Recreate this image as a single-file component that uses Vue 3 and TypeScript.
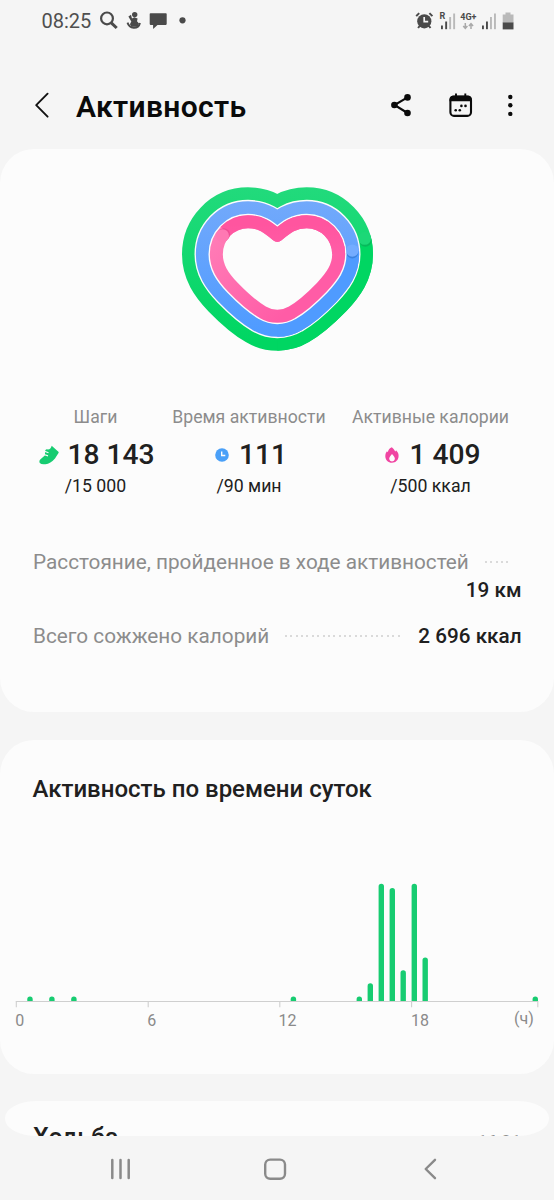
<script setup lang="ts">
interface Metric {
  id: 'steps' | 'time' | 'calories'
  label: string
  value: string
  goal: string
}

interface Bar {
  x: number
  height: number
}

interface Tick {
  x: number
  labelX: number
  label: string
}

const metrics: Metric[] = [
  { id: 'steps', label: 'Шаги', value: '18 143', goal: '/15 000' },
  { id: 'time', label: 'Время активности', value: '111', goal: '/90 мин' },
  { id: 'calories', label: 'Активные калории', value: '1 409', goal: '/500 ккал' },
]

const bars: Bar[] = [
  { x: 30, height: 4.5 },
  { x: 51.9, height: 4.5 },
  { x: 73.9, height: 4.5 },
  { x: 293.4, height: 4.5 },
  { x: 359.3, height: 4.5 },
  { x: 370.3, height: 17.7 },
  { x: 381.3, height: 117.3 },
  { x: 392.3, height: 113 },
  { x: 403.2, height: 30.7 },
  { x: 414.3, height: 117.3 },
  { x: 425.2, height: 43.6 },
  { x: 535.3, height: 4.5 },
]

const ticks: Tick[] = [
  { x: 16.3, labelX: 15.3, label: '0' },
  { x: 148.2, labelX: 147.2, label: '6' },
  { x: 279.8, labelX: 278.6, label: '12' },
  { x: 411.6, labelX: 411, label: '18' },
  { x: 537.8, labelX: 0, label: '' },
]

const baseline = 131
const barWidth = 5.4

function barPath(bar: Bar): string {
  const r = barWidth / 2
  const left = bar.x - r
  const right = bar.x + r
  const top = baseline - bar.height
  return `M${left} ${baseline}V${top + r}A${r} ${r} 0 0 1 ${right} ${top + r}V${baseline}Z`
}

const heart =
  'M322 181C350 157 372 140 410 140C463 140 506 184 506 238C506 275 487 303 455 337C425 368 390 398 365 412C350 421 337 424 322 424C307 424 294 421 279 412C254 398 219 368 189 337C157 303 139 275 139 238C139 184 181 140 234 140C272 140 294 157 322 181Z'
</script>

<template>
  <div class="screen">
    <header class="status">
      <span class="clock">08:25</span>
      <svg class="status-left" width="100" height="24" viewBox="0 0 100 24">
        <circle cx="13" cy="10.400" r="5.900" fill="none" stroke="#4a4a4a" stroke-width="2.200" />
        <path d="M17.300 14.800l5.400 5.200" stroke="#4a4a4a" stroke-width="3" />
        <g fill="#4a4a4a">
          <circle cx="40.700" cy="6.600" r="2.700" />
          <path d="M34.400 8.600l2.600-1.800 1 3.800 2.200-1.400 3.400 1.200-.6 2.800 2 2.200-1.400 3.400h-6l-1.700-2.600 1.400-2.600z" />
          <path d="M33.500 14.600q1.400 4.600 6.200 5.200q5 .2 6.300-4.800" fill="none" stroke="#4a4a4a" stroke-width="1.900" />
          <path d="M56.500 5.300h15.400q.8 0 .8.8v10q0 .8-.8.8h-8.400l-4.400 4v-4h-2.600q-.8 0-.8-.8v-10q0-.8.8-.8z" />
          <circle cx="88.500" cy="12.300" r="3.100" />
        </g>
      </svg>
      <svg class="status-right" width="104" height="24" viewBox="0 0 104 24">
        <g fill="#4a4a4a">
          <circle cx="14.300" cy="13.300" r="7.100" />
          <path d="M9.600 18l-1.500 2M19 18l1.500 2M6.200 8.100l3-3M22.400 8.100l-3-3" stroke="#4a4a4a" stroke-width="2" />
          <path d="M14.200 9v4.700h4" fill="none" stroke="#f5f5f5" stroke-width="1.700" />
          <rect x="31" y="17.500" width="1.900" height="3.700" />
          <rect x="35.200" y="13.500" width="1.900" height="7.700" />
          <rect x="72" y="17.500" width="1.900" height="3.700" />
          <rect x="76" y="13.500" width="1.900" height="7.700" />
        </g>
        <g fill="#b9b9b9">
          <rect x="39.200" y="9" width="1.900" height="12.200" />
          <rect x="43.200" y="5.500" width="1.900" height="15.700" />
          <rect x="80" y="9" width="1.900" height="12.200" />
          <rect x="84" y="5.500" width="1.900" height="15.700" />
          <path d="M95.500 4.600h5v1.800h3v8.500H92.700V6.400h2.800z" />
        </g>
        <rect x="92.700" y="14.500" width="10.800" height="6.900" fill="#4a4a4a" />
        <path d="M55.300 15v5M53.200 18.100l2.100 2.200 2.100-2.200M61 21v-5M58.900 17.900l2.100-2.200 2.100 2.200" fill="none" stroke="#a9a9a9" stroke-width="1.500" />
        <text class="tiny" x="29.500" y="11.300">R</text>
        <text class="tiny" x="50.300" y="12">4G+</text>
      </svg>
    </header>

    <nav class="appbar">
      <svg class="back" width="16" height="28" viewBox="0 0 16 28">
        <path d="M13.600 2.700L2.200 14.200l11.400 11.500" fill="none" stroke="#111" stroke-width="1.900" stroke-linecap="round" stroke-linejoin="round" />
      </svg>
      <h1>Активность</h1>
      <svg class="tools" width="130" height="30" viewBox="0 0 130 30">
        <path d="M17.500 7.300L4.500 15l13 8" fill="none" stroke="#0b0b0b" stroke-width="2.100" />
        <circle cx="17.500" cy="7.400" r="3.300" />
        <circle cx="4.400" cy="15" r="3.300" />
        <circle cx="17.500" cy="23" r="3.300" />
        <rect x="60.400" y="6.600" width="20.600" height="19.300" rx="3.600" fill="none" stroke="#0b0b0b" stroke-width="2.100" />
        <path d="M59.500 11.200v-2q0-3.500 3.500-3.500h15.300q3.500 0 3.500 3.500v2z" />
        <path d="M66 3.500v4M75.300 3.500v4" stroke="#0b0b0b" stroke-width="1.900" />
        <g>
          <circle cx="65.700" cy="20.200" r="1.300" />
          <circle cx="69.800" cy="20.200" r="1.300" />
          <circle cx="71.400" cy="15.900" r="1.300" />
          <circle cx="75.500" cy="15.900" r="1.300" />
        </g>
        <circle cx="120.300" cy="7" r="2.200" />
        <circle cx="120.300" cy="15.300" r="2.200" />
        <circle cx="120.300" cy="23.900" r="2.200" />
      </svg>
    </nav>

    <section class="card summary">
      <svg class="heart" width="215" height="185" viewBox="0 0 645 555">
        <defs>
          <linearGradient id="green" gradientUnits="userSpaceOnUse" x1="0" y1="36" x2="0" y2="500">
            <stop offset="0" stop-color="#22da7c" />
            <stop offset="1" stop-color="#00d662" />
          </linearGradient>
          <linearGradient id="blue" gradientUnits="userSpaceOnUse" x1="0" y1="80" x2="0" y2="470">
            <stop offset="0" stop-color="#72a9fb" />
            <stop offset="1" stop-color="#4f9bff" />
          </linearGradient>
          <linearGradient id="pink" gradientUnits="userSpaceOnUse" x1="130" y1="170" x2="360" y2="400">
            <stop offset="0" stop-color="#ff7db7" />
            <stop offset="1" stop-color="#ff5ca6" />
          </linearGradient>
          <linearGradient id="pink-top" gradientUnits="userSpaceOnUse" x1="0" y1="150" x2="0" y2="238">
            <stop offset="0" stop-color="#ff559f" />
            <stop offset="1" stop-color="#ff5da7" />
          </linearGradient>
          <clipPath id="green-tail"><rect x="322" y="192" width="320" height="360" /></clipPath>
          <clipPath id="blue-tail"><rect x="322" y="228" width="320" height="320" /></clipPath>
        </defs>
        <g stroke-linejoin="round">
          <path :d="heart" fill="none" stroke="url(#green)" stroke-width="206" />
          <path :d="heart" fill="none" stroke="#00d662" stroke-width="206" clip-path="url(#green-tail)" />
          <circle cx="586" cy="197" r="18.500" fill="#07b95b" />
          <circle cx="584" cy="190" r="19.500" fill="#1cd877" />
          <path :d="heart" fill="none" stroke="#fcfcfc" stroke-width="131" />
          <path :d="heart" fill="none" stroke="url(#blue)" stroke-width="123" />
          <path :d="heart" fill="none" stroke="#4f9bff" stroke-width="123" clip-path="url(#blue-tail)" />
          <circle cx="547" cy="233" r="17.500" fill="#3b82df" />
          <circle cx="547" cy="227" r="18.500" fill="#74acff" />
          <path :d="heart" fill="none" stroke="#fcfcfc" stroke-width="47" />
          <path :d="heart" fill="#fcfcfc" stroke="url(#pink)" stroke-width="39" />
          <path
            d="M166 169C183.500 151 207 140 234 140C272 140 294 157 322 181C350 157 372 140 410 140C463 140 506 184 506 238"
            fill="none" stroke="url(#pink-top)" stroke-width="39"
          />
          <circle cx="161" cy="178.500" r="19" fill="#ee4c93" />
          <circle cx="157.500" cy="182" r="19.500" fill="#ff78b3" />
        </g>
      </svg>

      <div class="metrics">
        <div v-for="m in metrics" :key="m.id" class="metric">
          <span class="label">{{ m.label }}</span>
          <div class="value" :class="m.id">
            <svg v-if="m.id === 'steps'" width="20" height="20" viewBox="0 0 20 20">
              <path
                d="M12.700.7L19.400 6.800q.5.600.1 1.300L16 13.500Q11.500 18.700 6.500 19.200Q2.500 19.800.8 18Q-.3 16 1.500 14.300L5.800 10.500 6.300 5.300Q7.300 3.600 9 4.500Q11.800 4.300 12.700.7z"
                fill="#17cc71"
              />
              <path d="M5.500 6.300l4 1.400M5 9.500l4 1.400" stroke="#fcfcfc" stroke-width="1.200" />
            </svg>
            <svg v-else-if="m.id === 'time'" width="14" height="14" viewBox="0 0 14 14">
              <circle cx="7" cy="7" r="6.800" fill="#4aa0f8" />
              <path d="M6.700 3.600v3.900h3.600" fill="none" stroke="#fcfcfc" stroke-width="1.400" />
            </svg>
            <svg v-else width="14" height="16" viewBox="0 0 14 16">
              <path
                d="M6.800.2C9 2 9.300 3.200 10.300 4.500Q10.900 3.900 11 3.200C13 5.100 13.700 7 13.600 9C13.500 13 10.600 15.700 7 15.700C3.300 15.700.3 13 .3 9.200C.3 7 1 5.300 2 4.200Q2.500 4.800 2.800 5.200C3.300 2.600 4.800 1 6.800.2z"
                fill="#f045a2"
              />
              <path d="M7 6.900C8.500 8.800 10 10 9.900 12.100Q9.500 14.500 7 14.600Q4.500 14.500 4.200 12.100C4.100 10 5.700 8.700 7 6.900z" fill="#fcfcfc" />
            </svg>
            <strong>{{ m.value }}</strong>
          </div>
          <span class="goal">{{ m.goal }}</span>
        </div>
      </div>

      <dl class="totals">
        <div class="total wrapped">
          <dt>Расстояние, пройденное в ходе активностей</dt>
          <span class="leader" />
          <dd>19 км</dd>
        </div>
        <div class="total">
          <dt>Всего сожжено калорий</dt>
          <span class="leader" />
          <dd>2 696 ккал</dd>
        </div>
      </dl>
    </section>

    <section class="card daytime">
      <h2>Активность по времени суток</h2>
      <svg class="chart" width="554" height="170" viewBox="0 0 554 170">
        <path v-for="bar in bars" :key="bar.x" :d="barPath(bar)" fill="#17cc71" />
        <path d="M15.800 131.500H538.300" stroke="#cfcfcf" stroke-width="1.100" />
        <path v-for="t in ticks" :key="t.x" :d="`M${t.x} 131.500v5.700`" stroke="#cfcfcf" stroke-width="1.100" />
        <text v-for="t in ticks" :key="t.label" class="axis" :x="t.labelX" y="156">{{ t.label }}</text>
        <text class="axis" x="514" y="153.700">(ч)</text>
      </svg>
    </section>

    <section class="card walk">
      <span class="walk-title">Ходьба</span>
      <span class="walk-time">16:31</span>
    </section>

    <footer class="navbar">
      <svg width="554" height="64" viewBox="0 0 554 64">
        <g fill="none" stroke="#8a8a8a" stroke-width="2.400" stroke-linecap="round" stroke-linejoin="round">
          <path d="M112.300 24v18M120.500 24v18M128.700 24v18" stroke-width="2.500" />
          <rect x="265.200" y="23.600" width="19.800" height="19.200" rx="5" />
          <path d="M435 23.800l-9.300 9.200 9.300 9.200" />
        </g>
      </svg>
    </footer>
  </div>
</template>

<style>
body {
  margin: 0;
  background: #f5f5f5;
}
</style>

<style scoped>
.screen {
  width: 554px;
  height: 1200px;
  overflow: hidden;
  background: #f5f5f5;
  font-family: Roboto, "Noto Sans", sans-serif;
  color: #202020;
  display: flex;
  flex-direction: column;
}

.screen svg {
  display: block;
  flex: none;
}

.status {
  height: 42px;
  display: flex;
  align-items: center;
  padding: 0 40.500px 0 41.500px;
  flex: none;
}

.clock {
  width: 52px;
  font-size: 20px;
  color: #4f4f4f;
}

.status-left {
  margin-top: -2px;
}

.status-right {
  margin: -2px 0 0 auto;
}

.tiny {
  font-size: 9px;
  font-weight: 700;
  fill: #4a4a4a;
}

.appbar {
  height: 107px;
  box-sizing: border-box;
  padding: 20px 0 0 34px;
  display: flex;
  align-items: flex-start;
  flex: none;
}

.back {
  margin-top: 29px;
}

h1 {
  margin: 26px 0 0 26px;
  width: 314px;
  font-size: 30px;
  line-height: 37px;
  letter-spacing: 0.350px;
  font-weight: 600;
  color: #0a0a0a;
}

.tools {
  margin-top: 28px;
  fill: #0b0b0b;
}

.card {
  background: #fcfcfc;
  border-radius: 34px;
  box-sizing: border-box;
  flex: none;
}

.summary {
  height: 563px;
  padding-top: 26px;
}

.heart {
  margin-left: 170px;
}

.metrics {
  margin: 45px 0 0 32px;
  display: grid;
  grid-template-columns: 127px 154px 157px;
  column-gap: 13px;
}

.metric {
  display: flex;
  flex-direction: column;
  align-items: center;
  white-space: nowrap;
}

.metric:last-child {
  margin: 0 -13px 0 13px;
}

.label {
  font-size: 17.650px;
  line-height: 24px;
  color: #8c8c8c;
}

.value {
  height: 51px;
  display: flex;
  align-items: center;
  gap: 8px;
}

.value strong {
  font-size: 28.200px;
  font-weight: 500;
}

.value.steps {
  margin-left: 3px;
}

.value.time {
  gap: 10px;
  margin-left: 4px;
}

.value.calories {
  gap: 10px;
  margin-left: 5px;
}

.goal {
  margin-top: -6px;
  font-size: 17.700px;
  line-height: 24px;
}

.totals {
  margin: 50px 32.500px 0 33px;
  font-size: 20.750px;
  line-height: 28px;
}

.total {
  display: flex;
  flex-wrap: wrap;
  align-items: center;
  white-space: nowrap;
}

.total + .total {
  margin-top: 18px;
}

dt {
  color: #8c8c8c;
}

dd {
  margin: 0;
  font-size: 20.700px;
  font-weight: 500;
}

.leader {
  flex: 1;
  height: 2px;
  margin: 0 16px;
  background: repeating-linear-gradient(90deg, #dadada 0 2px, transparent 2px 5.360px);
}

.wrapped .leader {
  flex: none;
  width: 23.500px;
  margin-right: 0;
}

.wrapped dd {
  width: 100%;
  text-align: right;
}

.daytime {
  margin-top: 27.500px;
  height: 334.500px;
  padding-top: 34px;
}

h2 {
  margin: 0 0 0 32.500px;
  font-size: 24px;
  line-height: 30px;
  font-weight: 500;
}

.chart {
  margin-top: 66.500px;
}

.axis {
  font-size: 16px;
  fill: #8a8a8a;
}

.walk {
  margin: 27px 5px 0;
  height: 34.500px;
  border-radius: 32px / 17px;
  overflow: hidden;
  padding: 22px 28px 0;
  display: flex;
  justify-content: space-between;
}

.walk-title {
  font-size: 25px;
  line-height: 30px;
  font-weight: 500;
}

.walk-time {
  margin-top: 7px;
  font-size: 17.500px;
  line-height: 24px;
  color: #8c8c8c;
}

.navbar {
  height: 64px;
  flex: none;
}
</style>
